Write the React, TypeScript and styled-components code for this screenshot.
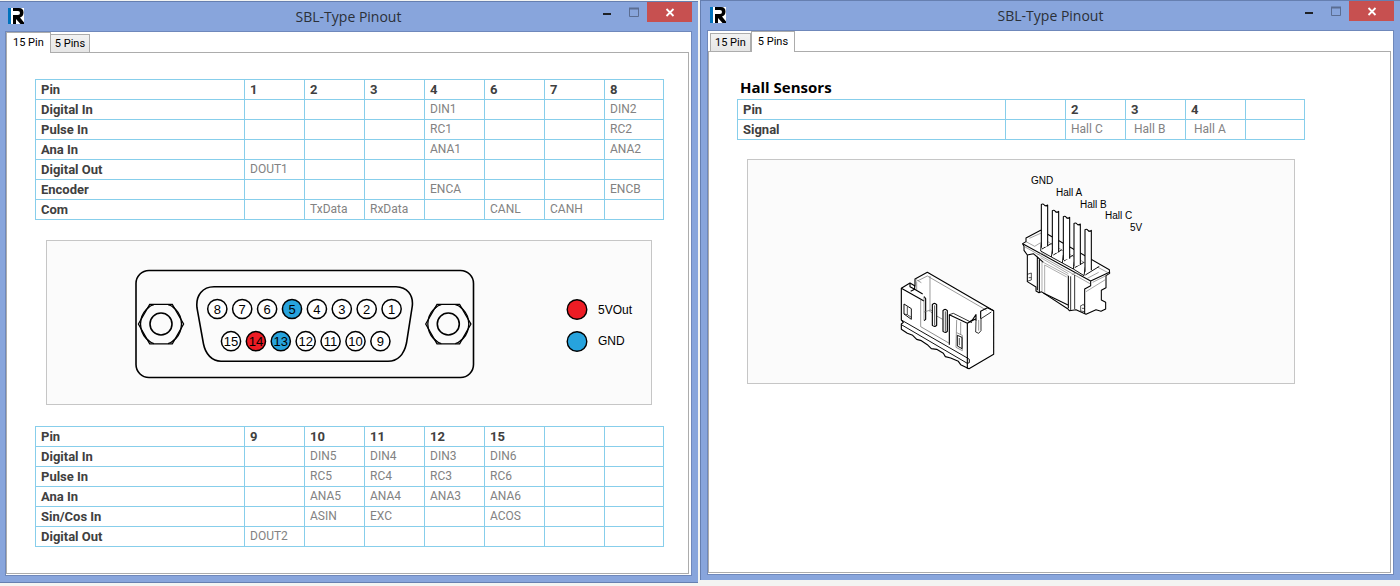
import React, { useState } from "react";
import styled, { createGlobalStyle, css } from "styled-components";

const GlobalStyle = createGlobalStyle`
  *, *::before, *::after { box-sizing: border-box; }
  body {
    margin: 0;
    background: #f3f4f2;
    font-family: Roboto, "Liberation Sans", sans-serif;
    font-size: 12px;
    color: #000;
  }
`;

const Desktop = styled.main`
  display: grid;
  grid-template-columns: 349fr 350fr;
  column-gap: 2px;
`;

const Frame = styled.section<{ $front?: boolean }>`
  display: flex;
  flex-direction: column;
  background: #88a5dc;
  border-top: 1px solid #667fb0;
  ${(p) =>
    p.$front
      ? css`
          margin-bottom: 6px;
          padding: 0 6px 5px;
          border-left: 1px solid #667fb0;
        `
      : css`
          margin: 1px 0 3px;
          padding: 0 6px 6px 5px;
          border-bottom: 1px solid #667fb0;
        `}
`;

const TitleBar = styled.header`
  display: grid;
  grid-template-columns: 1fr auto 1fr;
  height: 29px;
`;

const Logo = styled.svg`
  display: block;
  width: 16px;
  height: 16px;
  margin: 6px 0 0 3px;
`;

const Title = styled.h1`
  margin: 0;
  font: 400 14px/29px "Open Sans", "Noto Sans", sans-serif;
  color: #2b3038;
`;

const Controls = styled.div`
  display: flex;
  justify-content: flex-end;
  align-items: flex-start;
`;

const ControlButton = styled.button<{ $close?: boolean }>`
  width: ${(p) => (p.$close ? 45 : 27)}px;
  height: 20px;
  padding: ${(p) => (p.$close ? "0" : "0 0 0 2px")};
  border: 0;
  background: ${(p) => (p.$close ? "#c75050" : "transparent")};
  svg { display: block; margin: 0 auto; }
`;

const Client = styled.div`
  flex: 1;
  display: flex;
  flex-direction: column;
  border: 1px solid #6f88bb;
  background: #fff;
`;

const TabStrip = styled.div<{ $inset?: boolean }>`
  display: flex;
  align-items: flex-end;
  height: 20px;
  padding-left: ${(p) => (p.$inset ? 2 : 0)}px;
`;

const Tab = styled.button<{ $active?: boolean }>`
  font: 400 11px/14px Roboto, "Liberation Sans", sans-serif;
  color: #000;
  white-space: nowrap;
  border: 1px solid #acacac;
  ${(p) =>
    p.$active
      ? css`
          height: 21px;
          padding: 0 6px;
          margin: 0 -1px -1px 0;
          border-bottom: 0;
          background: #fff;
          position: relative;
        `
      : css`
          height: 19px;
          padding: 1px 4px 0;
          margin-bottom: -1px;
          background: linear-gradient(#f2f2f2, #e6e6e6);
        `}
`;

const Panel = styled.div`
  flex: 1;
  display: flex;
  flex-direction: column;
  border: 1px solid #acacac;
  background: #fff;
  margin: 0 2px 1px 0;
`;

const Sheet = styled.div<{ $hall?: boolean }>`
  padding: ${(p) => (p.$hall ? "26px 85px 27px 28px" : "26px 24px 26px 28px")};
`;

const Heading = styled.h2`
  margin: 0;
  padding: 0 0 2px 3px;
  font: 700 15px/19px "Open Sans", "Noto Sans", sans-serif;
`;

const PinTable = styled.table`
  width: 100%;
  border-collapse: collapse;
  table-layout: fixed;
  th, td {
    width: 60px;
    height: 20px;
    padding: 1px 0 1px 5px;
    border: 1px solid #87ceeb;
    line-height: 17px;
    text-align: left;
    white-space: nowrap;
  }
  th { font-size: 13px; font-weight: 700; color: #404040; }
  th:first-child { width: auto; }
  th:last-child { width: 59px; }
  td { font-weight: 400; color: #828282; }
`;

const Figure = styled.figure<{ $hall?: boolean }>`
  margin: ${(p) => (p.$hall ? "19px 10px 0" : "20px 12px 21px 11px")};
  border: 1px solid #c6c6c6;
  background: #fbfbfb;
  svg {
    display: block;
    width: 100%;
    font-family: "Liberation Sans", Arial, sans-serif;
  }
`;

type Grid = { head: string[]; rows: string[][] };

const upper: Grid = {
  head: ["Pin", "1", "2", "3", "4", "6", "7", "8"],
  rows: [
    ["Digital In", "", "", "", "DIN1", "", "", "DIN2"],
    ["Pulse In", "", "", "", "RC1", "", "", "RC2"],
    ["Ana In", "", "", "", "ANA1", "", "", "ANA2"],
    ["Digital Out", "DOUT1", "", "", "", "", "", ""],
    ["Encoder", "", "", "", "ENCA", "", "", "ENCB"],
    ["Com", "", "TxData", "RxData", "", "CANL", "CANH", ""],
  ],
};

const lower: Grid = {
  head: ["Pin", "9", "10", "11", "12", "15", "", ""],
  rows: [
    ["Digital In", "", "DIN5", "DIN4", "DIN3", "DIN6", "", ""],
    ["Pulse In", "", "RC5", "RC4", "RC3", "RC6", "", ""],
    ["Ana In", "", "ANA5", "ANA4", "ANA3", "ANA6", "", ""],
    ["Sin/Cos In", "", "ASIN", "EXC", "", "ACOS", "", ""],
    ["Digital Out", "DOUT2", "", "", "", "", "", ""],
  ],
};

const hall: Grid = {
  head: ["Pin", "", "2", "3", "4", ""],
  rows: [["Signal", "", "Hall C", "\u00a0Hall B", "\u00a0Hall A", ""]],
};

function Pins({ grid }: { grid: Grid }) {
  return (
    <PinTable>
      <thead>
        <tr>{grid.head.map((h, i) => <th key={i} scope="col">{h}</th>)}</tr>
      </thead>
      <tbody>
        {grid.rows.map((row) => (
          <tr key={row[0]}>
            {row.map((c, i) => (i === 0 ? <th key={i} scope="row">{c}</th> : <td key={i}>{c}</td>))}
          </tr>
        ))}
      </tbody>
    </PinTable>
  );
}

const BLUE = "#27a3dd";
const RED = "#ed1c24";
const topPins = [8, 7, 6, 5, 4, 3, 2, 1];
const bottomPins = [15, 14, 13, 12, 11, 10, 9];
const pinFill = (n: number) => (n === 14 ? RED : n === 5 || n === 13 ? BLUE : "#fff");

function Contact({ n, x, y }: { n: number; x: number; y: number }) {
  return (
    <>
      <circle cx={x} cy={y} r="9.6" fill={pinFill(n)} stroke="#000" strokeWidth="1.5" />
      <text x={x} y={y + 4.5} fontSize="13" textAnchor="middle">{n}</text>
    </>
  );
}

function Nut({ x }: { x: number }) {
  return (
    <g transform={`translate(${x} 324)`} fill="none" stroke="#000" strokeWidth="1.3">
      <path d="M-22.6 0L-11.3 -19.6H11.3L22.6 0L11.3 19.8H-11.3Z" />
      <path d="M-13.5 -15.8Q-10 -19 -7 -19.4M13.5 -15.8Q10 -19 7 -19.4M-13.5 15.8Q-10 19 -7 19.6M13.5 15.8Q10 19 7 19.6" />
      <path d="M-20 -4.5Q-21 0 -20 4.5M20 -4.5Q21 0 20 4.5M-12 -17Q-18.5 -12 -20 -4.5M12 -17Q18.5 -12 20 -4.5M-12 17Q-18.5 12 -20 4.5M12 17Q18.5 12 20 4.5" />
      <circle r="11" strokeWidth="1.6" />
    </g>
  );
}

function DSubDrawing() {
  return (
    <svg viewBox="47 241 604 163" role="img" aria-label="15 pin connector">
      <g fill="none" stroke="#000" strokeWidth="1.6">
        <rect x="136" y="270.5" width="337.5" height="107" rx="13" />
        <path d="M214 286.8H396C407 287 413.500 295 412.300 306L406.500 343C404 355 397 361.300 388 361.300H221C212 361.300 205.500 354 203.500 344L197 308C195.500 295 203 286.800 214 286.800Z" />
      </g>
      <Nut x={161} />
      <Nut x={448.3} />
      {topPins.map((n, i) => <Contact key={n} n={n} x={217.3 + i * 24.9} y={309} />)}
      {bottomPins.map((n, i) => <Contact key={n} n={n} x={231 + i * 24.9} y={341.2} />)}
      <circle cx="577" cy="309.500" r="9.800" fill={RED} stroke="#000" strokeWidth="1.400" />
      <circle cx="577" cy="341.500" r="9.800" fill={BLUE} stroke="#000" strokeWidth="1.400" />
      <text x="598" y="314" fontSize="12">5VOut</text>
      <text x="598" y="345" fontSize="12">GND</text>
    </svg>
  );
}

const plugWires = [
  [124, 118, 248],
  [157, 137, 266],
  [190, 155, 285],
  [222, 175, 304],
  [255, 194, 320],
];

function HallDrawing() {
  return (
    <svg viewBox="748 160 546 223" role="img" aria-label="5 pin Hall sensor connector">
      <g fontSize="10">
        <text x="1031" y="184">GND</text>
        <text x="1056" y="196">Hall A</text>
        <text x="1080" y="208">Hall B</text>
        <text x="1105" y="219">Hall C</text>
        <text x="1130" y="231">5V</text>
      </g>

      {/* cable plug */}
      <g transform="translate(1000 165) scale(.33333)" fill="none" stroke="#000" strokeWidth="3.200" strokeLinejoin="round">
        <path fill="#fff" d="M68 236L78 230V219L122 196L328 314L329 325L318 332V368L304 376V405L317 412V432L303 439L288 434L258 448L228 434L208 437L204 432L124 380L117 383L108 378V366L82 350V270L72 256V244Z" />
        <path d="M68 236L272 348L328 322M272 348V362L254 372V446" />
        <path stroke="#666" strokeWidth="1.800" d="M72 244L270 356M78 230L104 244M88 220L124 204M104 244L122 233M292 306L326 324M278 352L318 332M258 380L316 344M262 340L296 322" />
        <path d="M82 270L100 266L112 276V376M118 284V382M112 276L130 292M205 332V430" />
        <path stroke="#777" strokeWidth="1.800" d="M122 278L205 326M130 292L205 332M134 300L200 336M126 290V380M134 300V384M112 270L124 264L142 274M215 330L226 324L240 330" />
        <path strokeWidth="2.400" d="M212 334V435M224 330V432" />
        <path d="M130 384L204 420" />
        <path strokeWidth="2" d="M82 328L94 324V345L84 348M86 338H94M240 424L250 418L254 424M242 424V438L254 440M246 430H254" />
        <path strokeWidth="2.800" d="M122 258L154 276L187 294L220 312L252 332M122 258L124 234M154 276L158 252M187 294L190 270M220 312L223 290M252 332L256 306M126 252L155 235M160 270L186 254M192 288L220 270M224 308L252 292M256 330L298 304" />
        <path stroke="#666" strokeWidth="1.800" d="M144 230L157 240M176 249L190 258M209 268L222 276M242 286L255 294" />
        {plugWires.map(([x, top, bottom]) => (
          <g key={x}>
            <path fill="#fff" d={`M${x} ${bottom}V${top}Q${x + 5} ${top - 3} ${x + 9} ${top + 2}T${x + 19} ${top + 2}V${bottom - 4}`} />
            <path strokeWidth="2" d={`M${x + 9} ${top + 4}L${x + 18} ${top + 5}`} />
          </g>
        ))}
      </g>

      {/* board header */}
      <g transform="translate(890 260) scale(.33333)" fill="none" stroke="#000" strokeWidth="3.400" strokeLinejoin="round">
        <path fill="#fff" d="M34 85L60 69L75 78V57L112 37L311 152V283L237 326L212 314L205 304L182 294L166 290L160 280L140 268L124 266L112 254L94 242L80 238L68 226L52 220L34 208V192L40 187L34 180Z" />
        <path d="M34 85L102 123M60 69V80L74 88V78M62 94L74 88L98 102M102 110L107 116V178L102 182" />
        <path stroke="#666" strokeWidth="2" d="M75 57L94 68M84 62L112 48L290 151M120 48V156M92 118V200M80 90V64M102 156L122 150L130 156M102 110V180" />
        <path d="M311 152L292 143L272 154V176M258 184V164L247 180L232 190L178 164V254M232 190V326M232 190L258 176" />
        <path strokeWidth="2.400" d="M258 184L257 216L266 220L273 212V176L304 156" />
        <path stroke="#666" strokeWidth="2" d="M266 180V212M200 180L198 262L217 272V226L200 218M212 186V224" />
        <path strokeWidth="2.400" d="M178 164L190 160L246 188" />
        <path strokeWidth="2.800" d="M42 132V162L64 178V146L42 132M202 226V258L216 266V232L202 226" />
        <path strokeWidth="2" d="M52 140V164L64 172M208 234V256M52 164L42 162" />
        <path strokeWidth="2.800" d="M34 180L232 294L238 298V308L232 310L34 194" />
        <path stroke="#555" strokeWidth="2" d="M92 200L178 250M122 156L128 160M140 168L158 178" />
        <path fill="#fff" d="M127 196V134Q133 126 140 134V196Q134 202 127 196ZM159 214V152Q165 144 172 152V214Q166 220 159 214Z" />
        <path strokeWidth="2" d="M134 136V196M166 154V214" />
      </g>
    </svg>
  );
}

function FifteenPin() {
  return (
    <Sheet>
      <Pins grid={upper} />
      <Figure><DSubDrawing /></Figure>
      <Pins grid={lower} />
    </Sheet>
  );
}

function FivePin() {
  return (
    <Sheet $hall>
      <Heading>Hall Sensors</Heading>
      <Pins grid={hall} />
      <Figure $hall><HallDrawing /></Figure>
    </Sheet>
  );
}

function PinoutWindow({ initialTab, front }: { initialTab: number; front?: boolean }) {
  const [tab, setTab] = useState(initialTab);
  return (
    <Frame $front={front}>
      <TitleBar>
        <Logo viewBox="0 0 16 16" aria-hidden="true">
          <rect width="16" height="16" fill="#fff" />
          <rect width="3" height="16" fill="#0072bc" />
          <path fill="#000" d="M5 0H11Q15.500 0 15.500 4.500Q15.500 8.500 12 9.500L16 14.500V16H12.500L8 11V16H5V7H10Q12 7 12 5Q12 3 10 3H5Z" />
        </Logo>
        <Title>SBL-Type Pinout</Title>
        <Controls>
          <ControlButton aria-label="Minimize">
            <svg width="9" height="20"><rect x="0" y="11" width="8" height="2" fill="#1e2126" /></svg>
          </ControlButton>
          <ControlButton aria-label="Maximize">
            <svg width="11" height="20"><path d="M.5 6V14.500H9.500V6" fill="none" stroke="#5b6d92" /><path d="M0 6.500H10" stroke="#5b6d92" strokeWidth="2" /></svg>
          </ControlButton>
          <ControlButton $close aria-label="Close">
            <svg width="10" height="20"><path d="M1.500 7L8.500 14M8.500 7L1.500 14" stroke="#fff" strokeWidth="1.800" /></svg>
          </ControlButton>
        </Controls>
      </TitleBar>
      <Client>
        <TabStrip role="tablist" $inset={tab === 1}>
          {["15 Pin", "5 Pins"].map((label, i) => (
            <Tab key={label} role="tab" aria-selected={tab === i} $active={tab === i} onClick={() => setTab(i)}>
              {label}
            </Tab>
          ))}
        </TabStrip>
        <Panel role="tabpanel">{tab === 0 ? <FifteenPin /> : <FivePin />}</Panel>
      </Client>
    </Frame>
  );
}

export default function App() {
  return (
    <>
      <GlobalStyle />
      <Desktop>
        <PinoutWindow initialTab={0} />
        <PinoutWindow initialTab={1} front />
      </Desktop>
    </>
  );
}
